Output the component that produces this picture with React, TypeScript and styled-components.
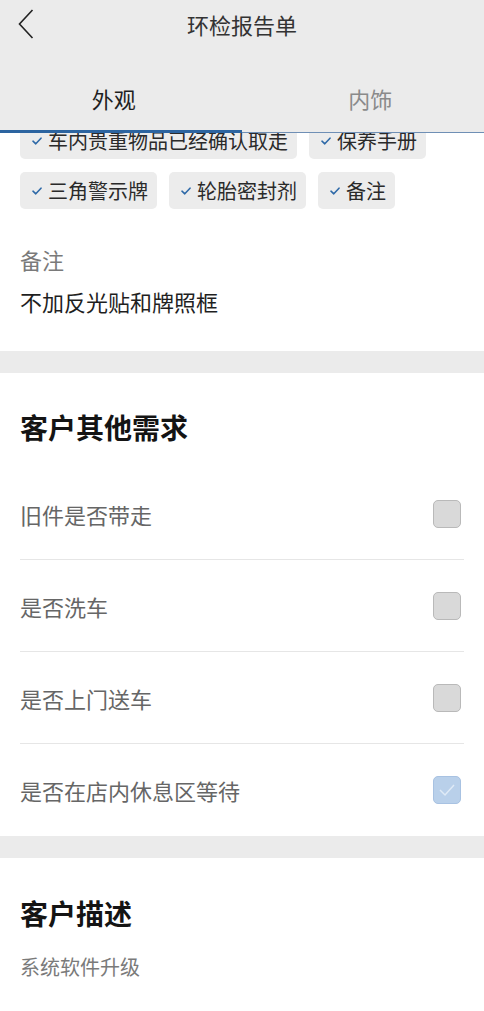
import React from "react";
import styled, { createGlobalStyle } from "styled-components";

const Global = createGlobalStyle`
  html, body { margin: 0; padding: 0; background: #fff; }
  body { font-family: "Noto Sans CJK SC", "Noto Sans", sans-serif; -webkit-font-smoothing: antialiased; }
  * { box-sizing: border-box; }
`;

const Page = styled.div`
  width: 484px;
  min-height: 1011px;
  background: #fff;
  overflow: hidden;
`;

const Header = styled.header`
  position: relative;
  z-index: 2;
  background: #ebebeb;
`;

const NavBar = styled.div`
  height: 48px;
  display: flex;
  align-items: center;
  justify-content: center;
  position: relative;
`;

const BackButton = styled.button`
  position: absolute;
  left: 12px;
  top: 6px;
  width: 28px;
  height: 36px;
  border: 0;
  padding: 0;
  background: transparent;
  display: flex;
  align-items: center;
  justify-content: center;
`;

const Title = styled.h1`
  margin: 0;
  font-size: 22px;
  font-weight: 400;
  color: #333;
  line-height: 48px;
`;

const Tabs = styled.div`
  display: flex;
  gap: 29px;
  padding-top: 18px;
`;

const Tab = styled.div<{ $active?: boolean }>`
  flex: 1;
  height: 64px;
  display: flex;
  align-items: center;
  justify-content: center;
  font-size: 22px;
  color: ${(p) => (p.$active ? "#1f1f1f" : "#8a8a8a")};
`;

const IndicatorTrack = styled.div`
  height: 3px;
  display: flex;
  align-items: flex-end;
  background: linear-gradient(to bottom, #ebebeb 0, #ebebeb 2px, #6f8fb5 2px);
`;

const IndicatorBar = styled.div`
  width: 242px;
  height: 3px;
  background: #2c64a0;
`;

const ChipsViewport = styled.div`
  overflow: hidden;
`;

const ChipList = styled.div`
  margin-top: -11px;
  padding: 0 20px;
  display: flex;
  flex-wrap: wrap;
  gap: 13px 12px;
`;

const Chip = styled.div`
  height: 37px;
  display: inline-flex;
  align-items: center;
  padding: 0 9px 0 12px;
  background: #ececec;
  border-radius: 5px;
  font-size: 20px;
  color: #2a2a2a;
  line-height: 37px;
`;

const CheckMark = styled.svg`
  width: 10px;
  height: 8px;
  margin-right: 6px;
  flex: none;
`;

const Remark = styled.div`
  padding: 35px 20px 35px;
`;

const RemarkLabel = styled.div`
  font-size: 22px;
  line-height: 30px;
  color: #7a7a7a;
`;

const RemarkValue = styled.div`
  margin-top: 12px;
  font-size: 22px;
  line-height: 30px;
  color: #1f1f1f;
`;

const Band = styled.div`
  height: 22px;
  background: #ebebeb;
`;

const Section = styled.section<{ $top: number }>`
  padding: ${(p) => p.$top}px 20px 0;
`;

const SectionTitle = styled.h2`
  margin: 0;
  font-size: 28px;
  line-height: 40px;
  font-weight: 700;
  color: #141414;
`;

const OptionList = styled.div`
  margin-top: 21px;
`;

const OptionRow = styled.div`
  height: 92px;
  display: flex;
  align-items: center;
  justify-content: space-between;
  padding-right: 3px;
  border-bottom: 1px solid #e6e6e6;
  &:last-child { border-bottom: 0; }
`;

const OptionText = styled.span`
  font-size: 22px;
  color: #666;
`;

const Box = styled.div<{ $checked?: boolean }>`
  width: 28px;
  height: 28px;
  border-radius: 5px;
  border: 1px solid ${(p) => (p.$checked ? "#a8c2e2" : "#b9b9b9")};
  background: ${(p) => (p.$checked ? "#b9d0ea" : "#d9d9d9")};
  display: flex;
  align-items: center;
  justify-content: center;
`;

const Description = styled.p`
  margin: 20px 0 0;
  font-size: 20px;
  line-height: 28px;
  color: #7a7a7a;
`;

const chips = ["车内贵重物品已经确认取走", "保养手册", "三角警示牌", "轮胎密封剂", "备注"];

const options: { label: string; checked: boolean }[] = [
  { label: "旧件是否带走", checked: false },
  { label: "是否洗车", checked: false },
  { label: "是否上门送车", checked: false },
  { label: "是否在店内休息区等待", checked: true },
];

const Tick = () => (
  <CheckMark viewBox="0 0 10 8">
    <path d="M1 4.2 L3.8 6.8 L9 1.2" fill="none" stroke="#2f6aa8" strokeWidth="1.6" strokeLinecap="round" strokeLinejoin="round" />
  </CheckMark>
);

export default function App() {
  return (
    <Page>
      <Global />
      <Header>
        <NavBar>
          <BackButton aria-label="返回">
            <svg width="16" height="30" viewBox="0 0 16 30">
              <path d="M14.5 1 L1.5 15 L14.5 29" fill="none" stroke="#222" strokeWidth="1.6" strokeLinejoin="miter" />
            </svg>
          </BackButton>
          <Title>环检报告单</Title>
        </NavBar>
        <Tabs>
          <Tab $active>外观</Tab>
          <Tab>内饰</Tab>
        </Tabs>
        <IndicatorTrack>
          <IndicatorBar />
        </IndicatorTrack>
      </Header>

      <ChipsViewport>
        <ChipList>
          {chips.map((c) => (
            <Chip key={c}>
              <Tick />
              {c}
            </Chip>
          ))}
        </ChipList>
      </ChipsViewport>

      <Remark>
        <RemarkLabel>备注</RemarkLabel>
        <RemarkValue>不加反光贴和牌照框</RemarkValue>
      </Remark>

      <Band />

      <Section $top={34}>
        <SectionTitle>客户其他需求</SectionTitle>
        <OptionList>
          {options.map((o) => (
            <OptionRow key={o.label}>
              <OptionText>{o.label}</OptionText>
              <Box $checked={o.checked}>
                {o.checked && (
                  <svg width="18" height="14" viewBox="0 0 18 14">
                    <path d="M2 7 L7 12 L16 2" fill="none" stroke="#dfeaf6" strokeWidth="1.5" />
                  </svg>
                )}
              </Box>
            </OptionRow>
          ))}
        </OptionList>
      </Section>

      <Band />

      <Section $top={35}>
        <SectionTitle>客户描述</SectionTitle>
        <Description>系统软件升级</Description>
      </Section>
    </Page>
  );
}
